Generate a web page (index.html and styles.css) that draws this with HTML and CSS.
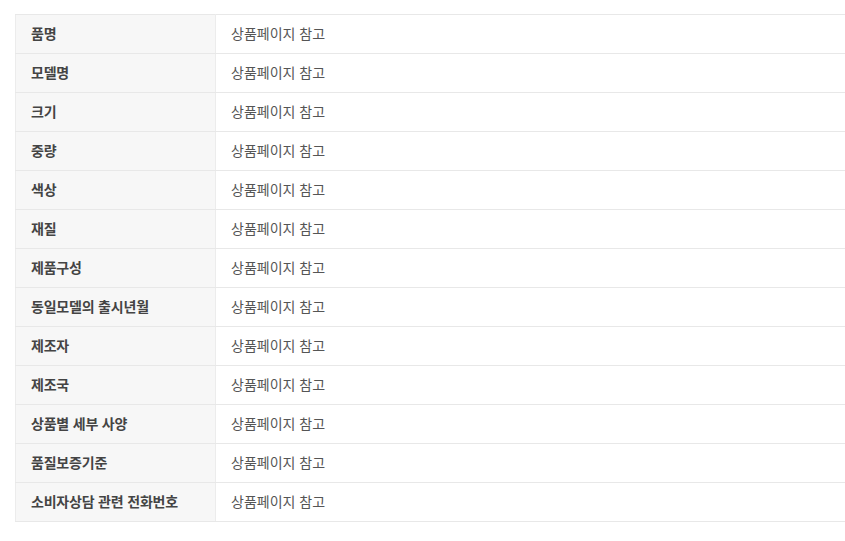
FILE: index.html
```html
<!DOCTYPE html>
<html lang="ko">
<head>
<meta charset="utf-8">
<link rel="stylesheet" href="styles.css">
</head>
<body>
<div class="wrap">
<table class="spec">
<tbody>
<tr><th>품명</th><td>상품페이지 참고</td></tr>
<tr><th>모델명</th><td>상품페이지 참고</td></tr>
<tr><th>크기</th><td>상품페이지 참고</td></tr>
<tr><th>중량</th><td>상품페이지 참고</td></tr>
<tr><th>색상</th><td>상품페이지 참고</td></tr>
<tr><th>재질</th><td>상품페이지 참고</td></tr>
<tr><th>제품구성</th><td>상품페이지 참고</td></tr>
<tr><th>동일모델의 출시년월</th><td>상품페이지 참고</td></tr>
<tr><th>제조자</th><td>상품페이지 참고</td></tr>
<tr><th>제조국</th><td>상품페이지 참고</td></tr>
<tr><th>상품별 세부 사양</th><td>상품페이지 참고</td></tr>
<tr><th>품질보증기준</th><td>상품페이지 참고</td></tr>
<tr><th>소비자상담 관련 전화번호</th><td>상품페이지 참고</td></tr>
</tbody>
</table>
</div>
</body>
</html>
```
FILE: styles.css
```css
html, body {
  margin: 0;
  padding: 0;
  background: #fff;
}
.wrap {
  padding: 14px 0 0 15px;
  overflow: hidden;
}
.spec {
  width: 840px;
  border-collapse: collapse;
  font-family: "Noto Sans CJK KR", "Noto Sans", sans-serif;
  font-size: 14px;
  border-top: 1px solid #e8e8e8;
  border-left: 1px solid #ececec;
}
.spec th, .spec td {
  height: 39px;
  padding: 0 0 2px 15px;
  border-bottom: 1px solid #e8e8e8;
  text-align: left;
  vertical-align: middle;
  box-sizing: border-box;
}
.spec th {
  width: 200px;
  background: #f7f7f7;
  color: #444;
  font-weight: bold;
  letter-spacing: -0.2px;
  border-right: 1px solid #ececec;
}
.spec td {
  color: #555;
  font-weight: normal;
}
```
